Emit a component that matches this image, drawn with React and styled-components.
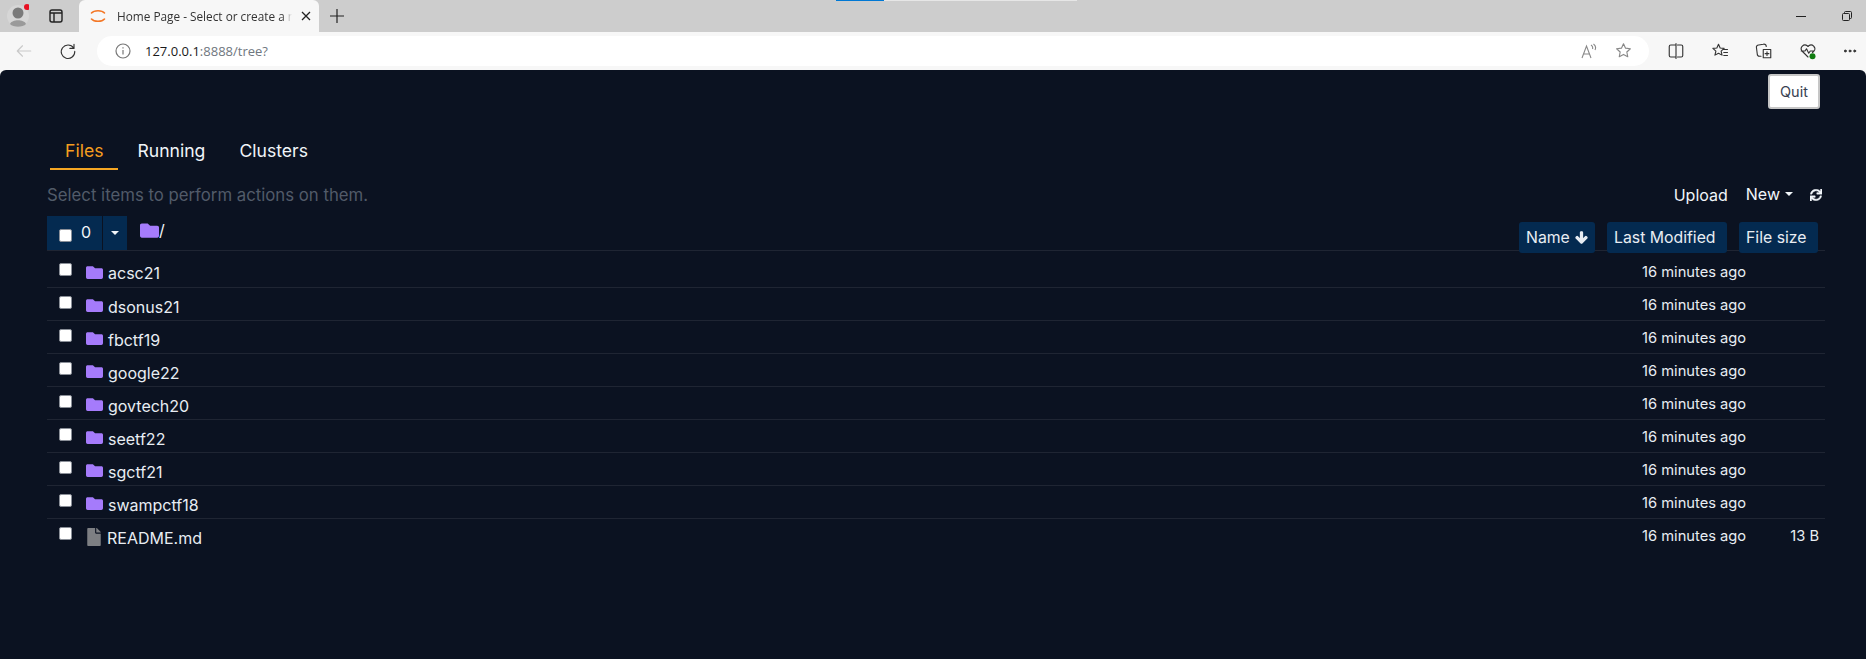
import React from "react";
import styled, { createGlobalStyle } from "styled-components";
import { FaFolder, FaFile, FaArrowDown, FaSync } from "react-icons/fa";

const GlobalStyle = createGlobalStyle`
  html, body {
    margin: 0;
    height: 100%;
    background: #f7f7f7;
    overflow: hidden;
  }
`;

const Window = styled.div`
  width: 1866px;
  height: 659px;
  display: flex;
  flex-direction: column;
  position: relative;
  font-family: Inter, "Liberation Sans", sans-serif;
`;

const TabStrip = styled.div`
  height: 32px;
  background: #cdcdcd;
  display: flex;
  align-items: center;
  flex: none;
`;

const Avatar = styled.svg`
  width: 22px;
  height: 24px;
  margin-left: 7px;
`;

const StripIcon = styled.svg`
  width: 16px;
  height: 16px;
  margin-left: 19px;
  margin-right: 15px;
`;

const BrowserTab = styled.div`
  width: 240px;
  height: 32px;
  background: #f7f7f7;
  border-radius: 6px 6px 0 0;
  display: flex;
  align-items: center;
  box-sizing: border-box;
  padding-left: 11px;
  font-size: 11.8px;
  color: #333;
  font-family: "Open Sans", sans-serif;
`;

const TabTitle = styled.span`
  margin-left: 11px;
  width: 184px;
  flex: none;
  white-space: nowrap;
  overflow: hidden;
  -webkit-mask-image: linear-gradient(to right, #000 165px, transparent 175px);
  mask-image: linear-gradient(to right, #000 165px, transparent 175px);
`;

const PlusIcon = styled.svg`
  width: 16px;
  height: 16px;
  margin-left: 10px;
`;

const WindowControls = styled.div`
  margin-left: auto;
  display: flex;
  align-items: center;
  gap: 36px;
  margin-right: 14px;
`;

const LoadBar = styled.div`
  position: absolute;
  top: 0;
  left: 836px;
  width: 241px;
  height: 1px;
  background: #e6e6e6;
`;

const LoadFill = styled.div`
  width: 48px;
  height: 1px;
  background: #0078d4;
`;

const Toolbar = styled.div`
  height: 38px;
  background: #f7f7f7;
  display: flex;
  align-items: center;
  flex: none;
  box-sizing: border-box;
  padding-bottom: 1px;
`;

const NavIcon = styled.svg`
  width: 18px;
  height: 18px;
  flex: none;
  margin-left: ${(p) => p.$left}px;
`;

const AddressBar = styled.div`
  width: 1552px;
  height: 30px;
  margin-left: 20px;
  background: #fff;
  border-radius: 15px;
  display: flex;
  align-items: center;
  box-sizing: border-box;
  padding-left: 18px;
  padding-right: 17px;
  flex: none;
`;

const Url = styled.span`
  margin-left: 14px;
  font-size: 13px;
  font-family: "Open Sans", sans-serif;
  color: #1a1a1a;
`;

const UrlRest = styled.span`
  color: #6f7780;
`;

const AddressTools = styled.div`
  margin-left: auto;
  display: flex;
  align-items: center;
  gap: 18px;
`;

const Page = styled.div`
  flex: 1;
  background: #0b1221;
  border-radius: 6px 6px 0 0;
  box-sizing: border-box;
  padding: 4px 41px 0 47px;
`;

const QuitRow = styled.div`
  display: flex;
  justify-content: flex-end;
  padding-right: 5px;
`;

const QuitButton = styled.button`
  width: 52px;
  height: 35px;
  background: #fff;
  border: 2px solid #c6c6c6;
  border-radius: 3px;
  color: #374151;
  font-family: inherit;
  font-size: 14.5px;
  padding: 0;
`;

const Tabs = styled.div`
  display: flex;
  margin-top: 21px;
  height: 40px;
  margin-left: 3px;
`;

const TabLink = styled.div`
  box-sizing: border-box;
  height: 40px;
  padding: 11px 15px 0;
  margin-right: 4px;
  font-size: 17.6px;
  line-height: 20px;
  color: ${(p) => (p.$active ? "#f59e1f" : "#f1f5f9")};
  border-bottom: ${(p) => (p.$active ? "2px solid #f5a623" : "none")};
`;

const ActionRow = styled.div`
  display: flex;
  align-items: center;
  height: 34px;
  margin-top: 8px;
  margin-bottom: 4px;
`;

const Hint = styled.div`
  font-size: 16.75px;
  color: #525b69;
`;

const Actions = styled.div`
  margin-left: auto;
  display: flex;
  align-items: center;
  color: #f1f5f9;
  font-size: 16px;
`;

const UploadLabel = styled.span`
  margin-top: -1px;
`;

const NewMenu = styled.span`
  margin-left: 18px;
  display: flex;
  align-items: center;
  margin-top: -3px;
`;

const Caret = styled.span`
  display: inline-block;
  width: 0;
  height: 0;
  border-left: 4px solid transparent;
  border-right: 4px solid transparent;
  border-top: 4px solid currentColor;
  margin-left: ${(p) => p.$left ?? 5}px;
`;

const RefreshIcon = styled(FaSync)`
  width: 12px;
  height: 12px;
  margin-left: 17px;
  margin-right: 3px;
  margin-top: -1px;
  stroke: currentColor;
  stroke-width: 16;
`;

const HeaderRow = styled.div`
  display: flex;
  height: 34px;
  border-bottom: 1px solid #1f2533;
  color: #f1f5f9;
`;

const SelectGroup = styled.div`
  display: flex;
  gap: 1px;
`;

const SelectButton = styled.div`
  width: 55px;
  height: 34px;
  background: #042a50;
  display: flex;
  align-items: center;
  box-sizing: border-box;
  padding-left: 12px;
  font-size: 16px;
`;

const CaretButton = styled.div`
  width: 24px;
  height: 34px;
  background: #042a50;
  display: flex;
  align-items: center;
  justify-content: center;
`;

const Check = styled.input.attrs({ type: "checkbox" })`
  appearance: none;
  width: 13px;
  height: 13px;
  margin: ${(p) => (p.$offset ? "4px 0 0" : "0")};
  background: #fff;
  border: 1px solid #8a8f98;
  border-radius: 2px;
  box-sizing: border-box;
  flex: none;
  display: block;
`;

const CountText = styled.span`
  margin-left: 9px;
  margin-top: -3px;
`;

const Breadcrumb = styled.div`
  display: flex;
  align-items: center;
  margin-left: 13px;
  font-size: 16px;
  height: 28px;
`;

const RootFolder = styled(FaFolder)`
  width: 19px;
  height: 19px;
  color: #a57bfb;
`;

const SortButtons = styled.div`
  margin-left: auto;
  display: flex;
  gap: 12px;
  margin-top: 6px;
  margin-right: 7px;
  height: 31px;
`;

const SortButton = styled.div`
  background: #042a50;
  border-radius: 3px;
  display: flex;
  align-items: center;
  box-sizing: border-box;
  width: ${(p) => p.$width}px;
  padding-left: 7px;
  font-size: 15.8px;
  color: #e8edf3;
`;

const SortArrow = styled(FaArrowDown)`
  width: 13px;
  height: 13px;
  margin-left: 5px;
  stroke: currentColor;
  stroke-width: 50;
`;

const Row = styled.div`
  display: grid;
  grid-template-columns: 39px 1fr 104px 79px;
  height: ${(p) => (p.$first ? 36 : 32)}px;
  border-bottom: ${(p) => (p.$last ? "none" : "1px solid #1f2533")};
  color: #e8edf3;
  font-size: 16px;
`;

const CheckCell = styled.div`
  padding-left: 12px;
  padding-top: ${(p) => (p.$first ? 12 : 8)}px;
`;

const NameCell = styled.div`
  display: flex;
  align-items: center;
  padding-top: ${(p) => (p.$first ? 8 : 5)}px;
`;

const RowFolder = styled(FaFolder)`
  width: 17px;
  height: 17px;
  color: #a57bfb;
  margin-right: 5px;
  margin-top: -2px;
`;

const RowFile = styled(FaFile)`
  width: 16px;
  height: 18px;
  color: #7d7f83;
  margin-right: 5px;
  margin-top: -1px;
`;

const ModifiedCell = styled.div`
  text-align: right;
  font-size: 14.7px;
  padding-top: ${(p) => (p.$first ? 11 : 7)}px;
  line-height: 20px;
  white-space: nowrap;
`;

const SizeCell = styled.div`
  text-align: right;
  font-size: 14.7px;
  line-height: 20px;
  padding-top: 7px;
  padding-right: 6px;
`;

const items = [
  { name: "acsc21" },
  { name: "dsonus21" },
  { name: "fbctf19" },
  { name: "google22" },
  { name: "govtech20" },
  { name: "seetf22" },
  { name: "sgctf21" },
  { name: "swampctf18" },
  { name: "README.md", file: true, size: "13 B" },
];

const ChromeIcon = ({ children, left, size = 18, box = 24 }) => (
  <NavIcon
    $left={left}
    style={{ width: size, height: size }}
    viewBox={`0 0 ${box} ${box}`}
    fill="none"
    stroke="#333"
    strokeWidth="1.5"
    strokeLinecap="round"
    strokeLinejoin="round"
  >
    {children}
  </NavIcon>
);

export default function App() {
  return (
    <Window>
      <GlobalStyle />
      <TabStrip>
        <Avatar viewBox="0 0 22 24">
          <circle cx="11" cy="12" r="11" fill="#d6d6d6" />
          <circle cx="11" cy="9" r="5.500" fill="#7a7a7a" />
          <path d="M3 20c2-5 14-5 16 0-3 3.500-13 3.500-16 0z" fill="#9a9a9a" />
          <circle cx="20" cy="3" r="3" fill="#e81123" />
        </Avatar>
        <StripIcon viewBox="0 0 16 16" fill="none" stroke="#222" strokeWidth="1.4">
          <rect x="2" y="2" width="12" height="12" rx="2" />
          <path d="M2 5h12M6 5v9" />
        </StripIcon>
        <BrowserTab>
          <svg width="16" height="16" viewBox="0 0 16 16" fill="none" stroke="#f37726" strokeWidth="1.6" strokeLinecap="round">
            <path d="M1.500 5C4 2 12 2 14.500 5" />
            <path d="M1.500 11C4 14 12 14 14.500 11" />
          </svg>
          <TabTitle>Home Page - Select or create a new notebook</TabTitle>
          <svg width="10" height="10" viewBox="0 0 10 10" stroke="#222" strokeWidth="1.3">
            <path d="M1 1l8 8M9 1l-8 8" />
          </svg>
        </BrowserTab>
        <PlusIcon viewBox="0 0 16 16" stroke="#222" strokeWidth="1.2">
          <path d="M8 1v14M1 8h14" />
        </PlusIcon>
        <WindowControls>
          <svg width="10" height="10" viewBox="0 0 10 10" stroke="#222">
            <path d="M0 5.500h10" />
          </svg>
          <svg width="10" height="10" viewBox="0 0 10 10" fill="none" stroke="#222">
            <rect x="0.500" y="2.500" width="7" height="7" rx="1" />
            <path d="M2.500 2.500V1.500a1 1 0 0 1 1-1h5a1 1 0 0 1 1 1v5a1 1 0 0 1-1 1h-1" />
          </svg>
        </WindowControls>
      </TabStrip>
      <LoadBar>
        <LoadFill />
      </LoadBar>
      <Toolbar>
        <ChromeIcon left={15}>
          <path stroke="#c9c9c9" d="M21 12H3M10 5l-7 7 7 7" />
        </ChromeIcon>
        <ChromeIcon left={26}>
          <path d="M19.500 8A9 9 0 1 0 21 12.500M20 3v5.500h-5.500" />
        </ChromeIcon>
        <AddressBar>
          <svg width="16" height="16" viewBox="0 0 16 16" fill="none" stroke="#777" strokeWidth="1.2" style={{ flex: "none" }}>
            <circle cx="8" cy="8" r="7" />
            <path d="M8 7v4.500M8 4.200v1.200" />
          </svg>
          <Url>
            127.0.0.1<UrlRest>:8888/tree?</UrlRest>
          </Url>
          <AddressTools>
            <svg width="16" height="16" viewBox="0 0 16 16" fill="none" stroke="#888" strokeWidth="1.1">
              <path d="M1 15L5.500 3 10 15M2.800 11h5.400M10 2c1.500 1 2 2.500 1.500 4M12.500 1c2 1.500 2.500 4 1.500 6" />
            </svg>
            <svg width="17" height="17" viewBox="0 0 24 24" fill="none" stroke="#888" strokeWidth="1.6" strokeLinejoin="round">
              <path d="M12 2.500l2.900 6.200 6.800.8-5 4.600 1.300 6.700-6-3.300-6 3.300 1.300-6.700-5-4.600 6.800-.8z" />
            </svg>
          </AddressTools>
        </AddressBar>
        <ChromeIcon left={18}>
          <path d="M11 4H5a2 2 0 0 0-2 2v12a2 2 0 0 0 2 2h6M14 4h5a2 2 0 0 1 2 2v12a2 2 0 0 1-2 2h-5M12 2v20" />
        </ChromeIcon>
        <ChromeIcon left={26}>
          <path d="M10 3l2.200 5 5.300.5-4 3.600 1.200 5.400L10 15l-4.700 2.500 1.200-5.400-4-3.600L7.800 8zM17 10h5M17 14h5M17 18h5" />
        </ChromeIcon>
        <ChromeIcon left={26}>
          <path d="M8 19H6a3 3 0 0 1-3-3L2 8a3 3 0 0 1 3-4l6-1a3 3 0 0 1 4 3M11 10h10v11H11zM16 13v5M13.500 15.500h5" />
        </ChromeIcon>
        <ChromeIcon left={26}>
          <path d="M12 20L4 12a5 5 0 0 1 7-7l1 1 1-1a5 5 0 0 1 7 7l-2 2M3 12h5l2-3 3 6 2-3h4" />
          <circle cx="18" cy="19" r="4" fill="#107c10" stroke="none" />
        </ChromeIcon>
        <ChromeIcon left={26} size={14}>
          <circle cx="4" cy="12" r="1.700" fill="#333" />
          <circle cx="12" cy="12" r="1.700" fill="#333" />
          <circle cx="20" cy="12" r="1.700" fill="#333" />
        </ChromeIcon>
      </Toolbar>
      <Page>
        <QuitRow>
          <QuitButton>Quit</QuitButton>
        </QuitRow>
        <Tabs>
          <TabLink $active>Files</TabLink>
          <TabLink>Running</TabLink>
          <TabLink>Clusters</TabLink>
        </Tabs>
        <ActionRow>
          <Hint>Select items to perform actions on them.</Hint>
          <Actions>
            <UploadLabel>Upload</UploadLabel>
            <NewMenu>
              New
              <Caret />
            </NewMenu>
            <RefreshIcon />
          </Actions>
        </ActionRow>
        <HeaderRow>
          <SelectGroup>
            <SelectButton>
              <Check $offset />
              <CountText>0</CountText>
            </SelectButton>
            <CaretButton>
              <Caret $left={0} />
            </CaretButton>
          </SelectGroup>
          <Breadcrumb>
            <RootFolder />/
          </Breadcrumb>
          <SortButtons>
            <SortButton $width={76}>
              Name
              <SortArrow />
            </SortButton>
            <SortButton $width={120}>Last Modified</SortButton>
            <SortButton $width={79}>File size</SortButton>
          </SortButtons>
        </HeaderRow>
        {items.map((item, i) => (
          <Row key={item.name} $first={i === 0} $last={i === items.length - 1}>
            <CheckCell $first={i === 0}>
              <Check />
            </CheckCell>
            <NameCell $first={i === 0}>
              {item.file ? <RowFile /> : <RowFolder />}
              {item.name}
            </NameCell>
            <ModifiedCell $first={i === 0}>16 minutes ago</ModifiedCell>
            <SizeCell>{item.size}</SizeCell>
          </Row>
        ))}
      </Page>
    </Window>
  );
}
